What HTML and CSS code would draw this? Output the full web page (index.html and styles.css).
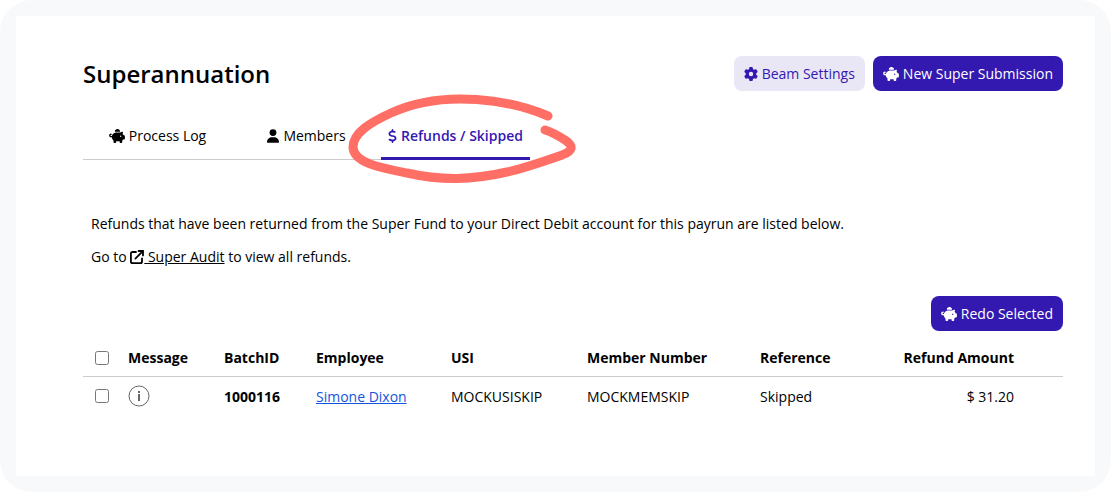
FILE: index.html
```html
<!DOCTYPE html>
<html lang="en">
<head>
  <meta charset="UTF-8">
  <title>Superannuation</title>
  <link rel="stylesheet" href="styles.css">
</head>
<body>
  <svg class="sprite" aria-hidden="true">
    <symbol id="piggy" viewBox="0 0 576 512">
      <path d="M400 96l0 .7c-5.3-.4-10.6-.7-16-.7H256c-16.5 0-32.5 2.1-47.8 6c-.1-2-.2-4-.2-6c0-53 43-96 96-96s96 43 96 96zm-16 32c3.5 0 7 .1 10.4 .3c4.2 .3 8.4 .7 12.6 1.3C424.6 109.1 450.8 96 480 96h11.5c10.4 0 18 9.8 15.5 19.9l-13.8 55.2c15.8 14.8 28.7 32.8 37.5 52.9H544c17.7 0 32 14.3 32 32v96c0 17.7-14.3 32-32 32H512c-9.1 12.1-19.9 22.9-32 32v64c0 17.7-14.3 32-32 32H416c-17.7 0-32-14.3-32-32V448H256v32c0 17.7-14.3 32-32 32H192c-17.7 0-32-14.3-32-32V416c-34.9-26.2-58.7-66.3-63.2-112H68c-37.6 0-68-30.4-68-68s30.4-68 68-68h4c13.3 0 24 10.7 24 24s-10.7 24-24 24H68c-11 0-20 9-20 20s9 20 20 20H99.2c12.1-59.8 57.7-107.5 116.3-122.8c12.9-3.4 26.5-5.2 40.5-5.2H384zm64 136a24 24 0 1 0 -48 0 24 24 0 1 0 48 0z"/>
    </symbol>
    <symbol id="gear" viewBox="0 0 512 512">
      <path d="M495.9 166.6c3.2 8.7 .5 18.4-6.4 24.6l-43.3 39.4c1.1 8.3 1.7 16.8 1.7 25.4s-.6 17.1-1.7 25.4l43.3 39.4c6.9 6.2 9.6 15.9 6.4 24.6c-4.4 11.9-9.7 23.3-15.8 34.3l-4.7 8.1c-6.6 11-14 21.4-22.1 31.2c-5.9 7.2-15.7 9.6-24.5 6.8l-55.7-17.7c-13.4 10.3-28.2 18.9-44 25.4l-12.5 57.1c-2 9.1-9 16.3-18.2 17.8c-13.8 2.3-28 3.5-42.5 3.5s-28.7-1.2-42.5-3.5c-9.2-1.5-16.2-8.7-18.2-17.8l-12.5-57.1c-15.8-6.5-30.6-15.1-44-25.4L83.1 425.9c-8.8 2.8-18.6 .3-24.5-6.8c-8.1-9.8-15.5-20.2-22.1-31.2l-4.7-8.1c-6.1-11-11.4-22.4-15.8-34.3c-3.2-8.7-.5-18.4 6.4-24.6l43.3-39.4C64.6 273.1 64 264.6 64 256s.6-17.1 1.7-25.4L22.4 191.2c-6.9-6.2-9.6-15.9-6.4-24.6c4.4-11.9 9.7-23.3 15.8-34.3l4.7-8.1c6.6-11 14-21.4 22.1-31.2c5.9-7.2 15.7-9.6 24.5-6.8l55.7 17.7c13.4-10.3 28.2-18.9 44-25.4l12.5-57.1c2-9.1 9-16.3 18.2-17.8C227.3 1.2 241.5 0 256 0s28.7 1.2 42.5 3.5c9.2 1.5 16.2 8.7 18.2 17.8l12.5 57.1c15.8 6.5 30.6 15.1 44 25.4l55.7-17.7c8.8-2.8 18.6-.3 24.5 6.8c8.1 9.8 15.5 20.2 22.1 31.2l4.7 8.1c6.1 11 11.4 22.4 15.8 34.3zM256 336a80 80 0 1 0 0-160 80 80 0 1 0 0 160z"/>
    </symbol>
    <symbol id="user" viewBox="0 0 448 512">
      <path d="M224 256A128 128 0 1 0 224 0a128 128 0 1 0 0 256zm-45.7 48C79.8 304 0 383.8 0 482.3C0 498.7 13.3 512 29.7 512H418.3c16.4 0 29.7-13.3 29.7-29.7C448 383.8 368.2 304 269.7 304H178.3z"/>
    </symbol>
    <symbol id="dollar" viewBox="0 0 320 512">
      <path d="M160 0c17.7 0 32 14.3 32 32V67.7c1.6 .2 3.1 .4 4.7 .7c.4 .1 .7 .1 1.1 .2l48 8.8c17.4 3.2 28.9 19.9 25.7 37.2s-19.9 28.9-37.2 25.7l-47.5-8.7c-31.3-4.6-58.9-1.5-78.3 6.2s-27.2 18.3-29 28.1c-2 10.7-.5 16.7 1.2 20.4c1.8 3.9 5.5 8.3 12.8 13.2c16.3 10.7 41.3 17.7 73.7 26.3l2.9 .8c28.6 7.6 63.6 16.8 89.6 33.8c14.2 9.3 27.6 21.9 35.9 39.5c8.5 17.9 10.3 37.9 6.4 59.2c-6.9 38-33.1 63.4-65.6 76.7c-13.7 5.6-28.6 9.2-44.4 11V480c0 17.7-14.3 32-32 32s-32-14.3-32-32V445.1c-.4-.1-.9-.1-1.3-.2l-.2 0 0 0c-24.4-3.8-64.5-14.3-91.5-26.3c-16.1-7.2-23.4-26.1-16.2-42.2s26.1-23.4 42.2-16.2c20.9 9.3 55.3 18.5 75.2 21.6c31.9 4.7 58.2 2 76-5.3c16.9-6.9 24.6-16.9 26.8-28.9c1.9-10.6 .4-16.7-1.3-20.4c-1.9-4-5.6-8.4-13-13.3c-16.4-10.7-41.5-17.7-74-26.3l-2.8-.7 0 0C119.4 279.3 84.4 270 58.4 253c-14.2-9.3-27.5-22-35.8-39.6c-8.4-17.9-10.1-37.9-6.1-59.2C23.7 116 52.3 91.2 84.8 78.3c13.3-5.3 27.9-8.9 43.2-11V32c0-17.7 14.3-32 32-32z"/>
    </symbol>
    <symbol id="external" viewBox="0 0 14 14">
      <path d="M6 2H2.6Q.9 2 .9 3.6V11.4Q.9 13.1 2.6 13.1H10.4Q12 13.1 12 11.4V8.5M8.6 1H13V5.4M12.8 1.2L5.4 8.6" fill="none" stroke="currentColor" stroke-width="1.8" stroke-linecap="round"/>
    </symbol>
  </svg>

  <main class="frame">
    <div class="page">
      <header class="page-header">
        <h1>Superannuation</h1>
        <div class="actions">
          <button type="button" class="btn btn-light"><svg class="icon"><use href="#gear"/></svg>Beam Settings</button>
          <button type="button" class="btn"><svg class="icon icon-wide"><use href="#piggy"/></svg>New Super Submission</button>
        </div>
      </header>

      <nav class="tabs">
        <a class="tab" href="#log"><svg class="icon icon-wide"><use href="#piggy"/></svg>Process Log</a>
        <a class="tab" href="#members"><svg class="icon icon-user"><use href="#user"/></svg>Members</a>
        <a class="tab active" href="#refunds" aria-current="page"><svg class="icon icon-narrow"><use href="#dollar"/></svg>Refunds / Skipped
          <svg class="highlight" viewBox="0 0 230 92" aria-hidden="true">
            <path d="M201 23C166 8 98 -5 44 20C24 29 6 40 6 54C6 70 35 75 60 80C95 88 125 87 160 79C178 75 195 69 215 62C226 58 227 53 218 47C210 42 205 39 198 37"/>
          </svg>
        </a>
      </nav>

      <section class="content">
        <div class="intro">
          <p>Refunds that have been returned from the Super Fund to your Direct Debit account for this payrun are listed below.</p>
          <p>Go to <a href="#audit"><svg class="icon icon-link"><use href="#external"/></svg> Super Audit</a> to view all refunds.</p>
        </div>

        <div class="table-actions">
          <button type="button" class="btn"><svg class="icon icon-wide"><use href="#piggy"/></svg>Redo Selected</button>
        </div>

        <table class="refunds">
          <colgroup>
            <col class="col-check">
            <col class="col-message">
            <col class="col-batch">
            <col class="col-employee">
            <col class="col-usi">
            <col class="col-member">
            <col class="col-reference">
            <col>
          </colgroup>
          <thead>
            <tr>
              <th class="check"><input type="checkbox" aria-label="Select all"></th>
              <th>Message</th>
              <th>BatchID</th>
              <th>Employee</th>
              <th>USI</th>
              <th>Member Number</th>
              <th>Reference</th>
              <th class="amount">Refund Amount</th>
            </tr>
          </thead>
          <tbody>
            <tr>
              <td class="check"><input type="checkbox" aria-label="Select batch 1000116"></td>
              <td>
                <button type="button" class="info" aria-label="Show message">
                  <svg viewBox="0 0 22 22"><circle cx="11" cy="11" r="10"/><path d="M11 6v2M11 9v7"/></svg>
                </button>
              </td>
              <td><b>1000116</b></td>
              <td><a href="#employee">Simone Dixon</a></td>
              <td>MOCKUSISKIP</td>
              <td>MOCKMEMSKIP</td>
              <td>Skipped</td>
              <td class="amount">$ 31.20</td>
            </tr>
          </tbody>
        </table>
      </section>
    </div>
  </main>
</body>
</html>
```
FILE: styles.css
```css
* {
  box-sizing: border-box;
}

body {
  margin: 0;
  background: #fff;
  color: #000;
  font-family: "Open Sans", "Noto Sans", sans-serif;
  font-size: 14px;
  line-height: 21px;
}

.sprite {
  display: none;
}

.frame {
  display: flex;
  min-height: 100vh;
  padding: 16px;
  background: #f8f9fb;
  border-radius: 32px;
}

.page {
  flex: 1;
  padding: 40px 32px 40px 67px;
  background: #fff;
}

.page-header {
  display: flex;
  align-items: center;
  justify-content: space-between;
}

h1 {
  margin: 0;
  font-size: 24px;
  font-weight: 600;
  line-height: 35px;
}

.actions {
  display: flex;
  gap: 8px;
}

.btn {
  display: inline-flex;
  align-items: center;
  gap: 4px;
  height: 35px;
  padding: 0 10px;
  border: none;
  border-radius: 8px;
  background: #3419b1;
  color: #fff;
  font: inherit;
  font-weight: 500;
  cursor: pointer;
}

.btn-light {
  background: #e9e6f6;
  color: #3419b1;
  font-weight: 400;
}

.icon {
  flex: none;
  width: 14px;
  height: 14px;
  fill: currentColor;
}

.icon-wide {
  width: 16px;
}

.icon-user {
  width: 12px;
}

.icon-narrow {
  width: 9px;
}

.tabs {
  display: grid;
  grid-template-columns: repeat(3, 149px);
  width: max-content;
  margin-top: 21px;
}

.tab {
  display: flex;
  align-items: center;
  justify-content: center;
  gap: 4px;
  height: 48px;
  border-bottom: 1px solid #ccc;
  color: #000;
  text-decoration: none;
}

.tab.active {
  position: relative;
  padding-top: 2px;
  border-bottom: 3px solid #3419b1;
  color: #3419b1;
  font-weight: 600;
}

/* hand-drawn ring over the current tab */
.highlight {
  position: absolute;
  top: -19px;
  left: -34px;
  width: 230px;
  height: 92px;
  fill: none;
  stroke: #ff6f66;
  stroke-width: 9;
  stroke-linecap: round;
  pointer-events: none;
}

.content {
  padding-top: 53px;
}

.intro {
  padding: 0 8px;
}

.intro p {
  margin: 0 0 12px;
}

.intro a {
  color: inherit;
}

.icon-link {
  vertical-align: -2px;
}

.table-actions {
  display: flex;
  justify-content: flex-end;
  margin-top: 29px;
}

.refunds {
  width: 100%;
  margin-top: 8px;
  border-collapse: collapse;
  table-layout: fixed;
}

.refunds th,
.refunds td {
  padding: 8px;
  text-align: left;
}

.refunds thead tr {
  border-bottom: 1px solid #ccc;
}

.refunds a {
  color: #1155dd;
}

.refunds .check {
  padding-left: 12px;
}

.refunds .amount {
  padding-right: 49px;
  text-align: right;
  white-space: nowrap;
}

.refunds input {
  display: block;
  width: 14px;
  height: 14px;
  margin: 0;
}

.col-check {
  width: 37px;
}

.col-message {
  width: 96px;
}

.col-batch {
  width: 92px;
}

.col-employee {
  width: 135px;
}

.col-usi {
  width: 136px;
}

.col-member {
  width: 173px;
}

.col-reference {
  width: 120px;
}

.info {
  display: block;
  padding: 0;
  border: none;
  background: none;
  cursor: pointer;
}

.info svg {
  display: block;
  width: 22px;
  height: 22px;
  fill: none;
  stroke: #666;
}

.info path {
  stroke-width: 2;
}
```
